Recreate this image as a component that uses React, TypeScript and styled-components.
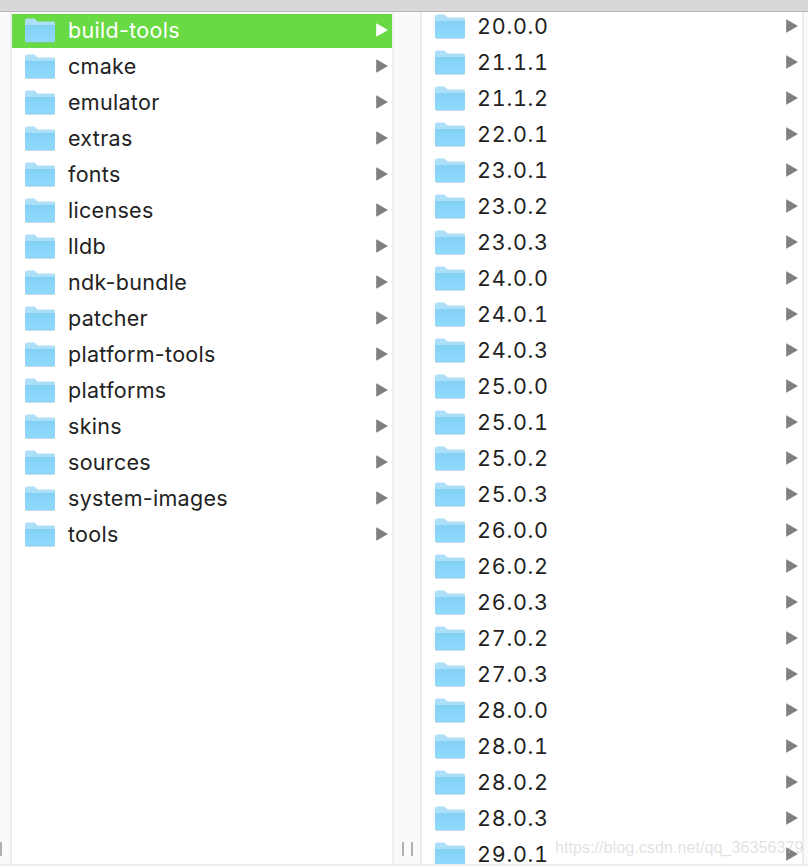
import React from 'react';
import styled, { createGlobalStyle } from 'styled-components';

const GlobalStyle = createGlobalStyle`
  html, body { margin: 0; padding: 0; height: 100%; overflow: hidden; background: #fff; }
  body { font-family: "Inter", "Liberation Sans", Arial, sans-serif; }
`;

const Window = styled.div`
  width: 808px;
  height: 866px;
  display: flex;
  flex-direction: column;
  overflow: hidden;
  position: relative;
`;

const TopBar = styled.div`
  height: 11px;
  flex: none;
  background: #d9d7d9;
  border-bottom: 1px solid #b9b8b9;
`;

const Browser = styled.div`
  flex: 1;
  min-height: 0;
  display: flex;
`;

const BottomEdge = styled.div`
  height: 2px;
  flex: none;
  background: #ececec;
`;

const Gutter = styled.div<{ $width: number; $ruled?: boolean }>`
  width: ${p => p.$width}px;
  flex: none;
  background: #fafafa;
  border-right: 2px solid #ececec;
  border-left: ${p => (p.$ruled ? '2px solid #f1f1f1' : 'none')};
  box-sizing: border-box;
  display: flex;
  align-items: flex-end;
  justify-content: center;
  gap: 7px;
  padding-bottom: 8px;
`;

const Grip = styled.span`
  width: 2px;
  height: 14px;
  background: #b0b0b0;
`;

const LeftGrip = styled(Grip)`
  margin-right: auto;
`;

const RightEdge = styled.div`
  flex: 1;
  background: #fafafa;
  border-left: 2px solid #ececec;
`;

const Column = styled.div<{ $width: number }>`
  width: ${p => p.$width}px;
  flex: none;
  background: #fff;
  overflow: hidden;
`;

const RowList = styled.div<{ $shift: number }>`
  margin-top: ${p => p.$shift}px;
`;

const RowBox = styled.div<{ $selected?: boolean }>`
  height: 36px;
  display: flex;
  align-items: center;
  padding: 0 4px 0 12px;
  box-sizing: border-box;
  background: ${p => (p.$selected ? 'linear-gradient(#fff 0 2px, #69d944 2px)' : 'transparent')};
  color: ${p => (p.$selected ? '#fff' : '#222')};
`;

const Label = styled.span`
  flex: 1;
  margin-left: 12px;
  font-size: 21.5px;
  font-weight: 400;
  letter-spacing: 0.3px;
  white-space: nowrap;
`;

const VersionLabel = styled(Label)`
  margin-left: 11px;
  font-variant-numeric: tabular-nums;
  letter-spacing: 0.75px;
`;

const Watermark = styled.div`
  position: absolute;
  left: 555px;
  top: 838px;
  font-family: "Liberation Sans", Arial, sans-serif;
  font-size: 16.2px;
  color: rgba(190, 190, 190, 0.45);
  white-space: nowrap;
`;

const FolderIcon: React.FC = () => (
  <svg width="32" height="26" viewBox="0 0 32 26" style={{ flex: 'none' }}>
    <defs>
      <linearGradient id="folderBody" x1="0" y1="0" x2="0" y2="1">
        <stop offset="0" stopColor="#84d0f6" />
        <stop offset="1" stopColor="#8fdafc" />
      </linearGradient>
    </defs>
    <path d="M1 3.5Q1 1.5 3 1.5H10.5L13.5 4.5H29.5Q31 4.5 31 6V10H1Z" fill="#ace0f9" />
    <path d="M1 24H31V24Q31 25.5 29 25.5H3Q1 25.5 1 24Z" fill="#8fb9d2" />
    <path d="M1 7H31V23Q31 25 29 25H3Q1 25 1 23Z" fill="url(#folderBody)" />
    <path d="M1 7H31V8H1Z" fill="#a8e0fa" />
  </svg>
);

const Arrow: React.FC<{ selected?: boolean }> = ({ selected }) => (
  <svg width="12" height="14" viewBox="0 0 12 14" style={{ flex: 'none' }}>
    <path
      d="M0.6 0.8L11.3 7L0.6 13.2Z"
      fill={selected ? '#fff' : '#808080'}
      stroke={selected ? '#fff' : '#808080'}
      strokeWidth="0.8"
      strokeLinejoin="round"
    />
  </svg>
);

const folders = ['build-tools', 'cmake', 'emulator', 'extras', 'fonts', 'licenses', 'lldb', 'ndk-bundle', 'patcher', 'platform-tools', 'platforms', 'skins', 'sources', 'system-images', 'tools'];

const versions = ['20.0.0', '21.1.1', '21.1.2', '22.0.1', '23.0.1', '23.0.2', '23.0.3', '24.0.0', '24.0.1', '24.0.3', '25.0.0', '25.0.1', '25.0.2', '25.0.3', '26.0.0', '26.0.2', '26.0.3', '27.0.2', '27.0.3', '28.0.0', '28.0.1', '28.0.2', '28.0.3', '29.0.1'];

const App: React.FC = () => (
  <Window>
    <GlobalStyle />
    <TopBar />
    <Browser>
      <Gutter $width={12}>
        <LeftGrip />
      </Gutter>
      <Column $width={380}>
        <RowList $shift={0}>
          {folders.map((f, i) => (
            <RowBox key={f} $selected={i === 0}>
              <FolderIcon />
              <Label>{f}</Label>
              <Arrow selected={i === 0} />
            </RowBox>
          ))}
        </RowList>
      </Column>
      <Gutter $width={30} $ruled>
        <Grip />
        <Grip />
      </Gutter>
      <Column $width={380}>
        <RowList $shift={-4}>
          {versions.map(v => (
            <RowBox key={v}>
              <FolderIcon />
              <VersionLabel>{v}</VersionLabel>
              <Arrow />
            </RowBox>
          ))}
        </RowList>
      </Column>
      <RightEdge />
    </Browser>
    <BottomEdge />
    <Watermark>https://blog.csdn.net/qq_36356379</Watermark>
  </Window>
);

export default App;
